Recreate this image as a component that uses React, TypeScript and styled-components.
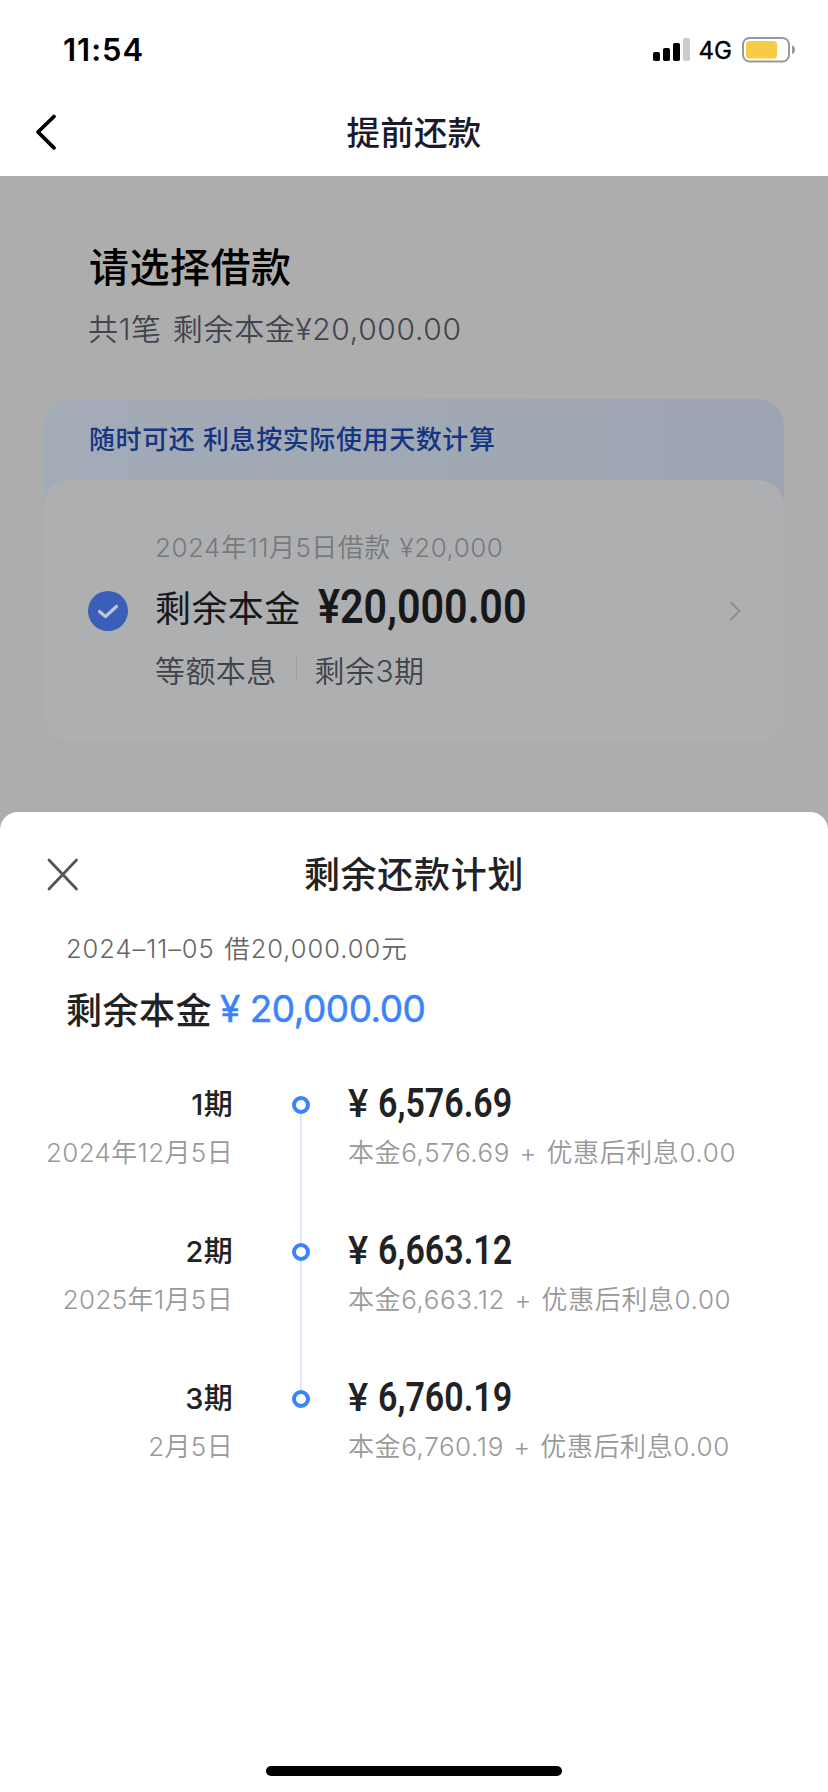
import React from "react";
import styled, { createGlobalStyle } from "styled-components";

const GlobalStyle = createGlobalStyle`
  * { box-sizing: border-box; }
  body {
    margin: 0;
    background: #fff;
    font-family: Inter, "Noto Sans CJK SC", sans-serif;
    color: #222;
    -webkit-font-smoothing: antialiased;
  }
`;

const Screen = styled.div`
  width: 828px;
  height: 1792px;
  display: flex;
  flex-direction: column;
  background: #adadad;
  overflow: hidden;
`;

const StatusBar = styled.header`
  height: 88px;
  flex: none;
  padding: 12px 32px 0 63px;
  display: flex;
  align-items: center;
  justify-content: space-between;
  background: #fff;
  color: #000;
`;

const Clock = styled.span`
  font-size: 31px;
  font-weight: 600;
  line-height: 40px;
  letter-spacing: 1px;
`;

const StatusIcons = styled.div`
  display: flex;
  align-items: center;
`;

const Network = styled.span`
  margin: 2px 10px 0 8px;
  font-size: 24px;
  font-weight: 400;
  line-height: 30px;
  -webkit-text-stroke: 0.4px #000;
`;

const NavBar = styled.nav`
  height: 88px;
  flex: none;
  display: grid;
  grid-template-columns: 100px 1fr 100px;
  align-items: center;
  background: #fff;
`;

const NavTitle = styled.h1`
  margin: 2px 0 0;
  text-align: center;
  font-size: 33.5px;
  font-weight: 500;
  line-height: 48px;
  letter-spacing: 0.3px;
  color: #1a1a28;
`;

const BackButton = styled.button`
  width: 34px;
  height: 40px;
  margin-left: 30px;
  padding: 0;
  border: 0;
  background: none;
`;

const Backdrop = styled.main`
  height: 636px;
  flex: none;
  padding: 64px 44px 0;
`;

const Heading = styled.h2`
  margin: 0 0 0 45px;
  font-size: 40px;
  font-weight: 500;
  line-height: 56px;
  letter-spacing: 0.5px;
  color: #000;
`;

const Summary = styled.p`
  margin: 11px 0 0 44px;
  font-size: 30px;
  line-height: 44px;
  letter-spacing: 0.65px;
  word-spacing: 2px;
  font-weight: 350;
  color: #42454e;
`;

const LoanCard = styled.section`
  margin-top: 48px;
  border-radius: 26px;
  background: linear-gradient(90deg, #a4abb8 0%, #a0a8b3 60%, #9da5b3 100%) top / 100% 120px no-repeat;
`;

const Banner = styled.div`
  height: 81px;
  padding-left: 45px;
  font-size: 26px;
  line-height: 82px;
  letter-spacing: 0.6px;
  font-weight: 500;
  color: #14357f;
`;

const LoanBody = styled.div`
  height: 261px;
  padding: 0 42px 0 44px;
  display: flex;
  border-radius: 26px;
  background: #aeafb1;
`;

const CheckMark = styled.svg`
  flex: none;
  margin-top: 111px;
`;

const LoanInfo = styled.div`
  flex: 1;
  padding: 48px 0 0 27px;
`;

const LoanTitle = styled.div`
  font-size: 26px;
  line-height: 40px;
  font-weight: 350;
  letter-spacing: 0.5px;
  word-spacing: 1px;
  color: #77797d;
`;

const PrincipalRow = styled.div`
  display: flex;
  align-items: center;
  height: 60px;
  margin-top: 8px;
  font-size: 36px;
  letter-spacing: 0.4px;
  font-weight: 400;
  color: #17181a;
`;

const Amount = styled.span<{ $size: number; $width: number; $scale: number; $gap?: number }>`
  display: inline-block;
  width: ${(p) => p.$width}px;
  margin-left: ${(p) => p.$gap ?? 0}px;
  font-family: Roboto, sans-serif;
  font-size: ${(p) => p.$size}px;
  font-weight: 600;
  letter-spacing: 0;
  white-space: nowrap;
  transform: scaleX(${(p) => p.$scale});
  transform-origin: left center;
`;

const TermsRow = styled.div`
  display: flex;
  align-items: center;
  height: 44px;
  margin-top: 11px;
  font-size: 30px;
  letter-spacing: 0.4px;
  font-weight: 350;
  color: #3f4249;
`;

const TermsDivider = styled.i`
  width: 1px;
  height: 24px;
  margin: 0 18px 0 19px;
  background: #9c9ea2;
`;

const Chevron = styled.svg`
  flex: none;
  margin-top: 120px;
`;

const Sheet = styled.section`
  flex: 1;
  display: flex;
  flex-direction: column;
  border-radius: 18px 18px 0 0;
  background: #fff;
`;

const SheetHeader = styled.div`
  display: grid;
  grid-template-columns: 100px 1fr 100px;
  align-items: center;
  height: 60px;
  margin-top: 32px;
`;

const SheetTitle = styled.h2`
  margin: 2px 0 0;
  text-align: center;
  font-size: 36px;
  font-weight: 500;
  line-height: 52px;
  letter-spacing: 0.7px;
  color: #222;
`;

const CloseButton = styled.button`
  width: 36px;
  height: 40px;
  margin-left: 45px;
  padding: 0;
  border: 0;
  background: none;
`;

const BorrowedLine = styled.p`
  margin: 25px 0 0 66px;
  font-size: 25.5px;
  line-height: 40px;
  font-weight: 350;
  letter-spacing: 0.95px;
  word-spacing: 1.5px;
  color: #666;
`;

const RemainingLine = styled.p`
  margin: 13px 0 0 66px;
  display: flex;
  align-items: center;
  height: 52px;
  font-size: 36px;
  letter-spacing: 0.5px;
  font-weight: 500;
`;

const RemainingAmount = styled.span`
  margin: 1px 0 0 8px;
  font-size: 37px;
  font-weight: 400;
  letter-spacing: -0.5px;
  color: #3a83fa;
  -webkit-text-stroke: 0.5px #3a83fa;
`;

const Plan = styled.ol`
  margin: 46px 0 0;
  padding: 0;
  list-style: none;
`;

const Installment = styled.li`
  display: grid;
  grid-template-columns: 233px 136px 1fr;
  height: 147px;
`;

const When = styled.div`
  text-align: right;
`;

const Term = styled.div`
  font-size: 29px;
  font-weight: 500;
  line-height: 49px;
  height: 48px;
  letter-spacing: 0.3px;
`;

const Muted = styled.div`
  font-size: 26px;
  font-weight: 350;
  line-height: 40px;
  margin-top: 5px;
  letter-spacing: 0.35px;
  color: #999;
  white-space: nowrap;
`;

const Rail = styled.div`
  display: flex;
  flex-direction: column;
  align-items: center;
  padding-top: 16px;
`;

const Dot = styled.i`
  width: 18px;
  height: 18px;
  flex: none;
  border: 4px solid #3a83fa;
  border-radius: 50%;
`;

const Line = styled.i`
  width: 2px;
  height: 129px;
  flex: none;
  background: #e1e8fa;
`;

const Detail = styled.div`
  margin-left: -21px;
`;

const AmountLine = styled.div`
  display: flex;
  align-items: center;
  height: 48px;
  padding-bottom: 1px;
`;

const Yen = styled.span`
  width: 30px;
  font-family: Roboto, sans-serif;
  font-size: 38px;
  font-weight: 500;
`;

const Breakdown = styled(Muted)`
  letter-spacing: 0.6px;
  word-spacing: 1.5px;
`;

const HomeIndicator = styled.div`
  width: 296px;
  height: 10px;
  margin: auto auto 16px;
  border-radius: 5px;
  background: #000;
`;

const installments = [
  { term: "1期", date: "2024年12月5日", amount: "6,576.69" },
  { term: "2期", date: "2025年1月5日", amount: "6,663.12" },
  { term: "3期", date: "2月5日", amount: "6,760.19" },
];

export default function App() {
  return (
    <Screen>
      <GlobalStyle />
      <StatusBar>
        <Clock>11:54</Clock>
        <StatusIcons>
          <svg width="38" height="24" viewBox="0 0 38 24">
            <rect x="0" y="14" width="7" height="9" rx="1.8" />
            <rect x="10" y="10" width="7" height="13" rx="1.8" />
            <rect x="20" y="5" width="7" height="18" rx="1.8" />
            <rect x="30" y="0" width="7" height="23" rx="1.8" fill="#ccc" />
          </svg>
          <Network>4G</Network>
          <svg width="54" height="26" viewBox="0 0 54 26">
            <rect x="1" y="1" width="46" height="23.5" rx="6.5" fill="none" stroke="#999" strokeWidth="2" />
            <rect x="4" y="4" width="31" height="17.5" rx="3.5" fill="#f6cb45" />
            <path d="M50 8.5c4 1 4 7.500 0 8.500z" fill="#999" />
          </svg>
        </StatusIcons>
      </StatusBar>
      <NavBar>
        <BackButton aria-label="返回">
          <svg width="34" height="40" viewBox="0 0 34 40" fill="none" stroke="#000" strokeWidth="3.8" strokeLinecap="round" strokeLinejoin="round">
            <path d="M24 4.500L8 20l16 15.800" />
          </svg>
        </BackButton>
        <NavTitle>提前还款</NavTitle>
      </NavBar>

      <Backdrop>
        <Heading>请选择借款</Heading>
        <Summary>共1笔 剩余本金¥20,000.00</Summary>
        <LoanCard>
          <Banner>随时可还 利息按实际使用天数计算</Banner>
          <LoanBody>
            <CheckMark width="40" height="41" viewBox="0 0 40 41">
              <circle cx="20" cy="20" r="20" fill="#3b5fb8" />
              <path d="M11.500 20.500l6 5 11-10" fill="none" stroke="#bcc5da" strokeWidth="3.200" strokeLinecap="round" strokeLinejoin="round" />
            </CheckMark>
            <LoanInfo>
              <LoanTitle>2024年11月5日借款 ¥20,000</LoanTitle>
              <PrincipalRow>
                剩余本金
                <Amount $size={48} $width={208} $scale={0.86} $gap={17}>¥20,000.00</Amount>
              </PrincipalRow>
              <TermsRow>
                等额本息
                <TermsDivider />
                剩余3期
              </TermsRow>
            </LoanInfo>
            <Chevron width="14" height="22" viewBox="0 0 14 22" fill="none" stroke="#8c8d90" strokeWidth="1.800">
              <path d="M2.500 2l9 9-9 9" />
            </Chevron>
          </LoanBody>
        </LoanCard>
      </Backdrop>

      <Sheet>
        <SheetHeader>
          <CloseButton aria-label="关闭">
            <svg width="36" height="40" viewBox="0 0 36 40" stroke="#555" strokeWidth="2.800" strokeLinecap="round">
              <path d="M4 6l27.500 29M31.500 6L4 35" />
            </svg>
          </CloseButton>
          <SheetTitle>剩余还款计划</SheetTitle>
        </SheetHeader>
        <BorrowedLine>2024–11–05 借20,000.00元</BorrowedLine>
        <RemainingLine>
          剩余本金
          <RemainingAmount>¥ 20,000.00</RemainingAmount>
        </RemainingLine>
        <Plan>
          {installments.map((item, i) => (
            <Installment key={item.term}>
              <When>
                <Term>{item.term}</Term>
                <Muted>{item.date}</Muted>
              </When>
              <Rail>
                <Dot />
                {i < installments.length - 1 && <Line />}
              </Rail>
              <Detail>
                <AmountLine>
                  <Yen>¥</Yen>
                  <Amount $size={40} $width={134} $scale={0.85}>{item.amount}</Amount>
                </AmountLine>
                <Breakdown>本金{item.amount} + 优惠后利息0.00</Breakdown>
              </Detail>
            </Installment>
          ))}
        </Plan>
        <HomeIndicator />
      </Sheet>
    </Screen>
  );
}
